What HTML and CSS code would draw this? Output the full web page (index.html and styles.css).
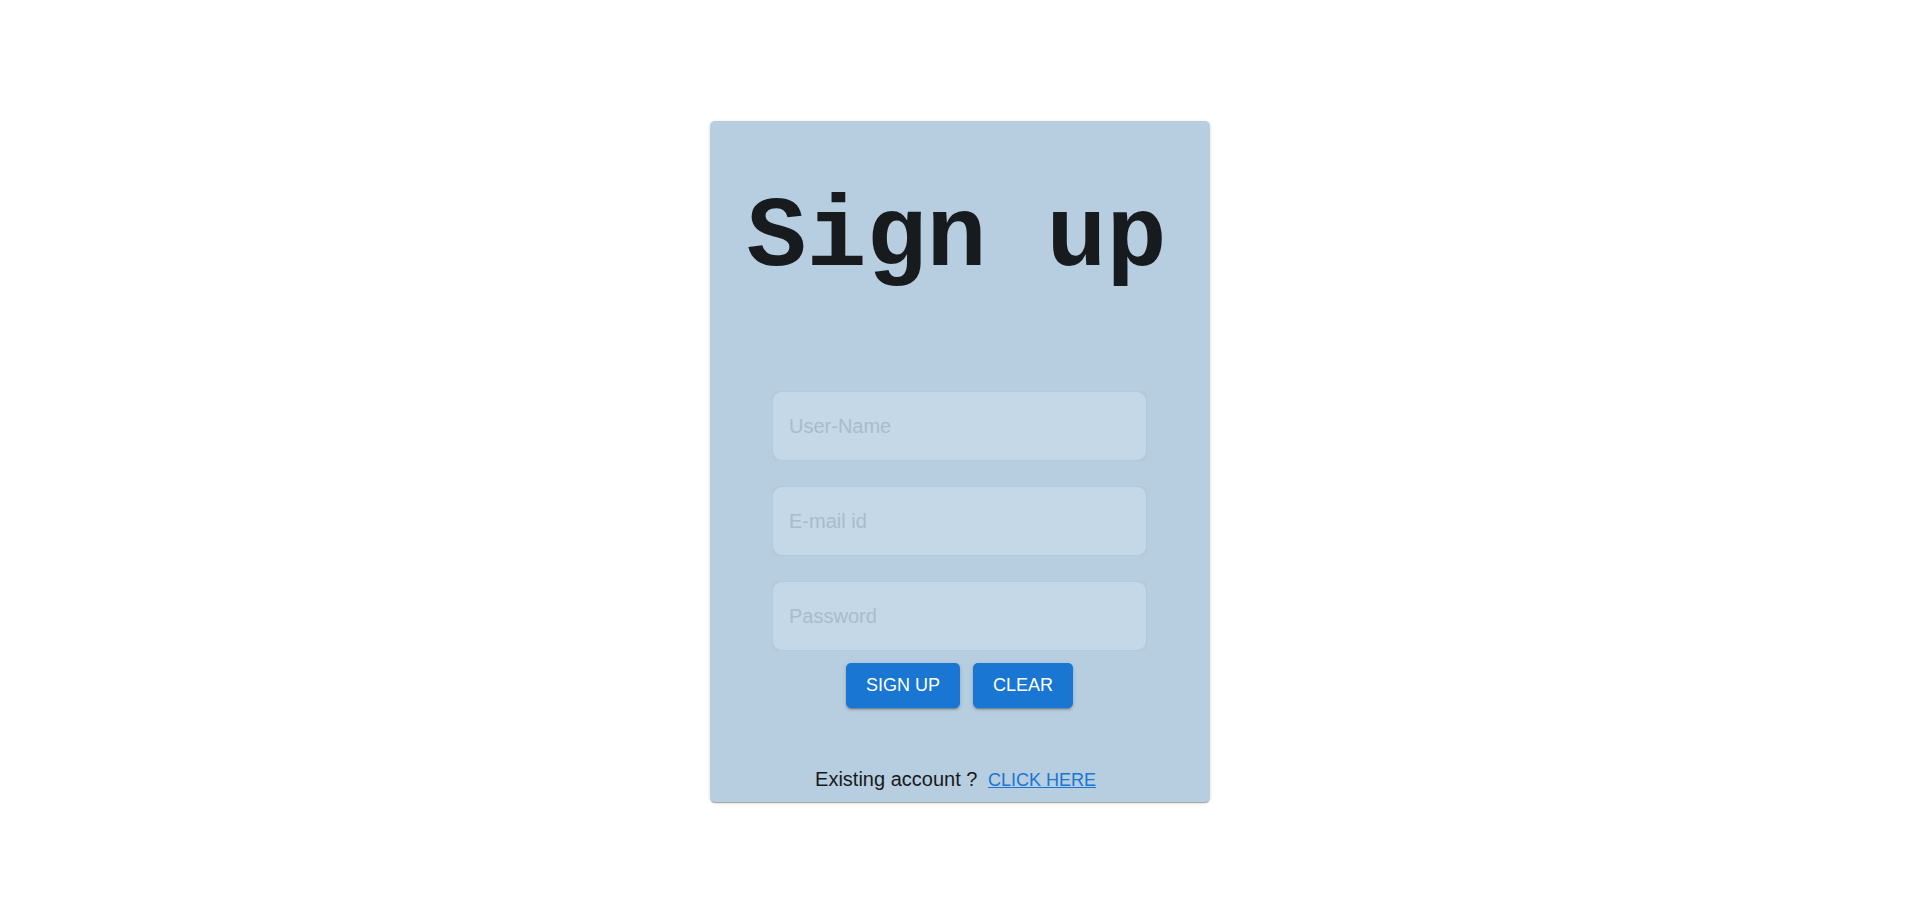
FILE: index.html
```html
<!DOCTYPE html>
<html lang="en">
<head>
<meta charset="utf-8">
<meta name="viewport" content="width=device-width, initial-scale=1">
<title>Sign up</title>
<link rel="stylesheet" href="styles.css">
</head>
<body>
<main class="page">
  <section class="card">
    <h1 class="title">Sign up</h1>
    <form class="form">
      <div class="field"><input class="input" type="text" placeholder="User-Name" aria-label="User-Name"></div>
      <div class="field"><input class="input" type="email" placeholder="E-mail id" aria-label="E-mail id"></div>
      <div class="field"><input class="input" type="password" placeholder="Password" aria-label="Password"></div>
      <div class="actions">
        <button class="button" type="submit">SIGN UP</button>
        <button class="button" type="reset">CLEAR</button>
      </div>
    </form>
    <p class="account">Existing account ? <a class="link" href="#login">CLICK HERE</a></p>
  </section>
</main>
</body>
</html>
```
FILE: styles.css
```css
* {
  box-sizing: border-box;
}

body {
  margin: 0;
  background: #fff;
  color: #18191b;
  font-family: "Liberation Sans", Arial, sans-serif;
}

.page {
  display: flex;
  align-items: center;
  justify-content: center;
  min-height: 100vh;
  padding: 26px 16px 24px;
}

.card {
  display: flex;
  flex-direction: column;
  align-items: center;
  width: 100%;
  max-width: 500px;
  padding: 58px 32px 7px;
  border-radius: 5px;
  background: #b6cee0;
  box-shadow: 0 2px 1px -1px rgba(0, 0, 0, 0.2), 0 1px 1px rgba(0, 0, 0, 0.14), 0 1px 4px rgba(0, 0, 0, 0.12);
}

.title {
  margin: 0 0 92px;
  padding-right: 6px;
  color: #181b1d;
  font: bold 100px/120px "Liberation Mono", "Courier New", monospace;
  white-space: nowrap;
}

.form {
  display: flex;
  flex-direction: column;
  gap: 25px;
  width: 100%;
  max-width: 375px;
}

.field {
  padding: 1px;
  border-radius: 5px;
  background: #b0cbdd;
}

.input {
  display: block;
  width: 100%;
  height: 68px;
  padding: 0 16px;
  border: 0;
  border-radius: 9px;
  background: #c5d8e7;
  color: #18191b;
  font: 20px/24px "Liberation Sans", Arial, sans-serif;
}

.input::placeholder {
  color: #a9bccc;
  opacity: 1;
}

.actions {
  display: flex;
  justify-content: center;
  gap: 13px;
  margin-top: -13px;
}

.button {
  padding: 12px 20px;
  border: 0;
  border-radius: 5px;
  background: #1976d2;
  box-shadow: 0 3px 1px -2px rgba(0, 0, 0, 0.2), 0 2px 2px rgba(0, 0, 0, 0.14), 0 1px 5px rgba(0, 0, 0, 0.12);
  color: #fff;
  font: 18px/21px "Liberation Sans", Arial, sans-serif;
  cursor: pointer;
}

.account {
  margin: 56px 0 0;
  padding-right: 8px;
  font-size: 20px;
  line-height: 30px;
}

.link {
  margin-left: 5px;
  color: #1976d2;
  font-size: 18px;
}
```
